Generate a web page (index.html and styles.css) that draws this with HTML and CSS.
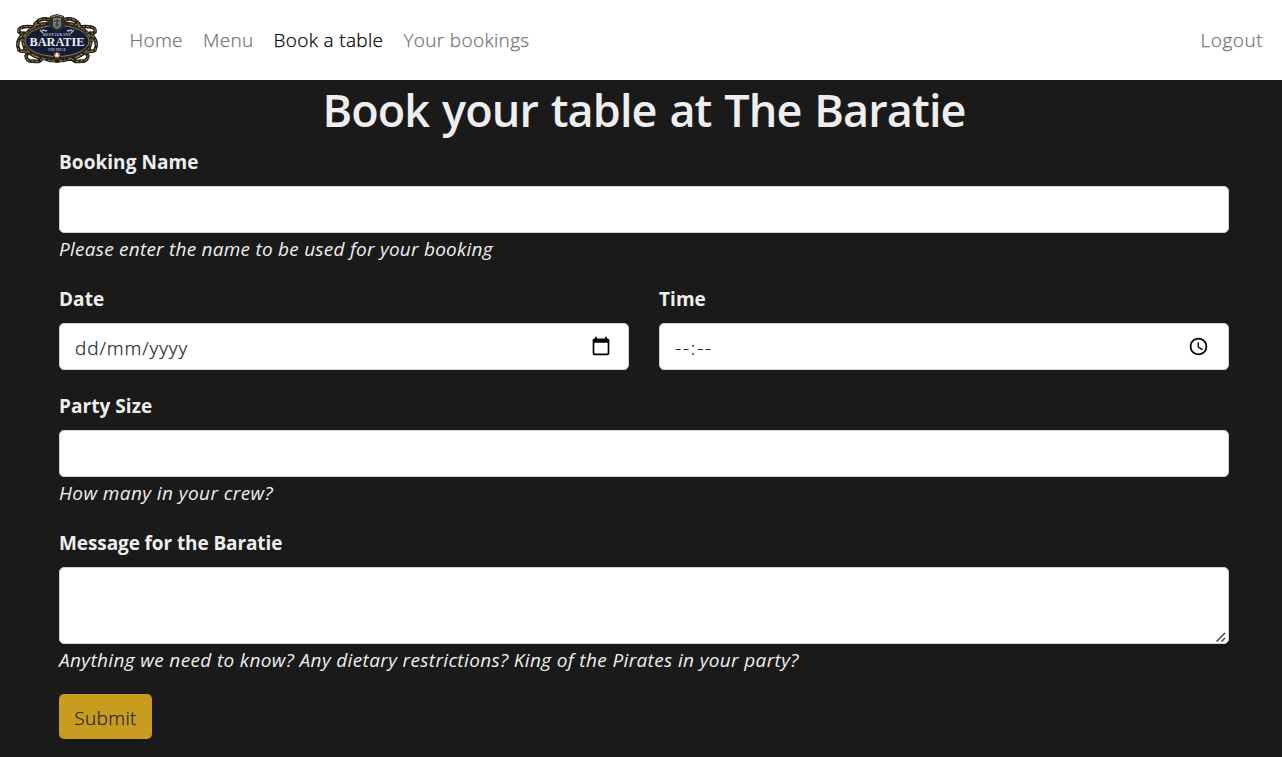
FILE: index.html
```html
<!DOCTYPE html>
<html lang="en">
<head>
<meta charset="utf-8">
<title>Book a table</title>
<link rel="stylesheet" href="styles.css">
</head>
<body>
<nav class="navbar">
  <a class="brand" href="#" aria-label="Baratie">
    <svg class="logo" viewBox="0 0 84 52" width="84" height="52">
      <defs>
        <g id="scrolls">
          <path d="M36 6 Q27 3 22 8 Q19 10 20 13 Q13 12 8 13 Q3 14 4 18 Q6 20 9 19"/>
          <path d="M8 21 Q4 24 3 28 Q2 32 4 36 Q8 39 10 35"/>
          <path d="M9 37 Q14 39 11 42 Q12 48 18 47 Q25 49 27 44 Q34 47 42 47"/>
          <path d="M18 14 Q9 19 8 27 Q9 38 22 43 M20 11 L30 10 M24 44 L18 40"/>
        </g>
      </defs>
      <g fill="none" stroke="#201d17" stroke-width="3.500" stroke-linecap="round">
        <use href="#scrolls"/>
        <use href="#scrolls" transform="matrix(-1 0 0 1 84 0)"/>
      </g>
      <path d="M20 10 L34 7 H50 L64 10 L70 18 V36 L64 44 H20 L14 36 V18 Z" fill="#2b261b"/>
      <ellipse cx="42" cy="27" rx="33" ry="17" fill="#131c34" stroke="#29241a" stroke-width="3"/>
      <g fill="none" stroke="#8f7643" stroke-width="1.200" stroke-dasharray="4 2 2 1">
        <use href="#scrolls"/>
        <use href="#scrolls" transform="matrix(-1 0 0 1 84 0)"/>
      </g>
      <ellipse cx="42" cy="27" rx="32" ry="15.500" fill="#131c34" stroke="#8c7d55" stroke-width="1"/>
      <path d="M35 2 L42 0 L49 2 L50 11 Q48 16 42 17 Q36 16 34 11 Z" fill="#302d24"/>
      <path d="M38 4 H46 V12 Q44 15 42 15 Q39 14 38 12 Z" fill="#6f7e7c"/>
      <path d="M39 7 H45 M40 11 H44 M42 5 V13" stroke="#2b3436"/>
      <path d="M36 3 L42 1.500 L48 3" stroke="#9a8350" fill="none"/>
      <path d="M25 16 L28 19 M27 16 L32 17 M59 16 L56 19 M57 16 L52 17" stroke="#b4b9bf" stroke-width="1.300"/>
      <text class="logo-small" x="42" y="21.500" textLength="28" lengthAdjust="spacingAndGlyphs">RESTAURANT</text>
      <text class="logo-name" x="42" y="31.500" textLength="55" lengthAdjust="spacingAndGlyphs">BARATIE</text>
      <text class="logo-small" x="42" y="37" textLength="18" lengthAdjust="spacingAndGlyphs">ONE PIECE</text>
      <circle cx="42" cy="41.500" r="3.500" fill="#292219"/>
      <circle cx="42" cy="41" r="2.500" fill="#eee"/>
      <path d="M39 39 L41 40.500 M45 39 L43 40.500 M40 43.500 H44" stroke="#c23a26" stroke-width="1.300" fill="none"/>
    </svg>
  </a>
  <a class="nav-link" href="#">Home</a>
  <a class="nav-link" href="#">Menu</a>
  <a class="nav-link active" href="#">Book a table</a>
  <a class="nav-link" href="#">Your bookings</a>
  <a class="nav-link logout" href="#">Logout</a>
</nav>
<main class="container">
  <h1 class="title">Book your table at The Baratie</h1>
  <form class="booking">
    <div class="group">
      <label class="label" for="name">Booking Name</label>
      <input class="control" id="name" type="text">
      <small class="help">Please enter the name to be used for your booking</small>
    </div>
    <div class="row">
      <div class="field">
        <span class="label">Date</span>
        <div class="control picker">
          <span class="date-value">dd/mm/yyyy</span>
          <svg class="icon" width="20" height="20" viewBox="0 0 24 24"><path d="M20 3h-1V1h-2v2H7V1H5v2H4c-1.100 0-2 .9-2 2v16c0 1.100.9 2 2 2h16c1.100 0 2-.9 2-2V5c0-1.100-.9-2-2-2zm0 18H4V8h16v13z"/></svg>
        </div>
      </div>
      <div class="field">
        <span class="label">Time</span>
        <div class="control picker">
          <span class="time-value">--:--</span>
          <svg class="icon clock" width="21" height="21" viewBox="0 0 24 24"><path d="M11.990 2C6.470 2 2 6.480 2 12s4.470 10 9.990 10C17.520 22 22 17.520 22 12S17.520 2 11.990 2zM12 20c-4.420 0-8-3.580-8-8s3.580-8 8-8 8 3.580 8 8-3.580 8-8 8zm.5-13H11v6l5.250 3.150.75-1.230-4.500-2.670z"/></svg>
        </div>
      </div>
    </div>
    <div class="group">
      <label class="label" for="size">Party Size</label>
      <input class="control" id="size" type="text">
      <small class="help crew">How many in your crew?</small>
    </div>
    <div class="group last">
      <label class="label long" for="message">Message for the Baratie</label>
      <div class="control area" id="message">
        <svg class="grip" width="12" height="12" viewBox="0 0 12 12"><path d="M.5 10.500 L9 2 M5.500 10.500 L9 7"/></svg>
      </div>
      <small class="help note">Anything we need to know? Any dietary restrictions? King of the Pirates in your party?</small>
    </div>
    <button class="submit" type="button">Submit</button>
  </form>
</main>
</body>
</html>
```
FILE: styles.css
```css
* { box-sizing: border-box; }
body {
  margin: 0;
  height: 757px;
  overflow: hidden;
  background: #1a1a1a;
  color: #eee;
  font: 400 19px/30px "Open Sans", "Noto Sans", sans-serif;
}
.navbar {
  display: flex;
  align-items: center;
  height: 80px;
  padding: 0 19px 0 15px;
  background: #fff;
}
.brand { display: flex; width: 84px; margin-right: 30.5px; }
.logo { display: block; }
.logo-name { font: 700 12px/1 "Liberation Serif", serif; fill: #eceef4; text-anchor: middle; }
.logo-small { font: 700 4px/1 "Liberation Serif", serif; fill: #b4bccd; text-anchor: middle; }
.nav-link {
  margin-right: 20px;
  font-weight: 300;
  letter-spacing: .34px;
  color: #737373;
  -webkit-text-stroke: .25px currentColor;
  text-decoration: none;
  white-space: nowrap;
}
.nav-link.active { color: #000; }
.nav-link.logout { margin: 0 0 0 auto; letter-spacing: .5px; }
.container { padding: 0 53px 0 59px; }
.title {
  height: 67px;
  margin: 0;
  font-size: 45px;
  font-weight: 600;
  line-height: 60px;
  letter-spacing: -.9px;
  word-spacing: 2px;
  text-align: center;
  white-space: nowrap;
}
.group, .row { margin-bottom: 20px; }
.row { display: grid; grid-template-columns: 1fr 1fr; gap: 30px; margin-bottom: 21px; }
.group.last { margin-bottom: 19px; }
.label { display: block; height: 30px; margin-bottom: 9px; font-weight: 700; letter-spacing: .05px; }
.label.long { letter-spacing: -.1px; }
.control {
  display: block;
  width: 100%;
  height: 47px;
  border: 1px solid #ced4da;
  border-radius: 5px;
  background: #fff;
  color: #212529;
}
.picker { display: flex; align-items: center; justify-content: space-between; padding: 0 17px 0 15px; font-weight: 300; }
.date-value, .time-value { padding-top: 2px; -webkit-text-stroke: .25px currentColor; }
.date-value { letter-spacing: .9px; }
.time-value { letter-spacing: 1.8px; }
.icon { margin-bottom: 1px; fill: #000; }
.clock { margin-right: 2px; }
.area { display: flex; justify-content: flex-end; align-items: flex-end; height: 77px; }
.grip { fill: none; stroke: #444; stroke-width: 1.5; }
.help { display: block; height: 31px; font-size: 19px; line-height: 32px; font-style: italic; letter-spacing: .24px; white-space: nowrap; }
.help.crew { letter-spacing: .42px; }
.help.note { letter-spacing: .355px; }
.submit {
  display: block;
  width: 93px;
  height: 45px;
  padding: 2px 0 0;
  border: 0;
  border-radius: 5px;
  background: #c99c20;
  color: #212529;
  font: 300 19px/30px "Open Sans", "Noto Sans", sans-serif;
  letter-spacing: .4px;
  -webkit-text-stroke: .25px currentColor;
}
```
